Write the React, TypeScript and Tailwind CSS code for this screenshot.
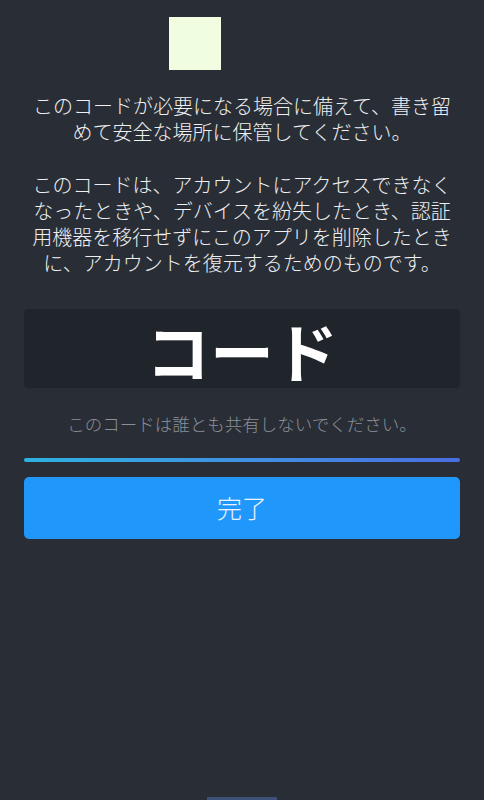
const font = "font-['Noto_Sans_CJK_JP','Noto_Sans',sans-serif]";

export default function App() {
  return (
    <div className={`flex h-[800px] w-full flex-col bg-[#292d35] px-6 ${font}`}>
      <div className="ml-[145px] mt-[17px] h-[53px] w-[52px] bg-[#f1fde0]" />

      <div className="mt-[23px] text-center text-[20px] font-light leading-[26px] text-[#eef0f2]">
        <p>
          <span className="block whitespace-nowrap">このコードが必要になる場合に備えて、書き留</span>
          <span className="block whitespace-nowrap">めて安全な場所に保管してください。</span>
        </p>
        <p className="mt-[27px]">
          <span className="block whitespace-nowrap">このコードは、アカウントにアクセスできなく</span>
          <span className="block whitespace-nowrap">なったときや、デバイスを紛失したとき、認証</span>
          <span className="block whitespace-nowrap">用機器を移行せずにこのアプリを削除したとき</span>
          <span className="block whitespace-nowrap">に、アカウントを復元するためのものです。</span>
        </p>
      </div>

      <div className="mt-[33px] flex h-[79px] items-center justify-center rounded-[4px] bg-[#20242b]">
        <span className="text-[64px] font-bold leading-none text-white">コード</span>
      </div>

      <p className="mt-[24px] text-center text-[17.5px] font-light leading-[24px] text-[#8b9098]">
        このコードは誰とも共有しないでください。
      </p>

      <div className="mt-[22px] h-[4px] rounded-full bg-gradient-to-r from-[#2cb2e2] to-[#4a6ee2]" />

      <button
        type="button"
        className="mt-[15px] flex h-[62px] items-center justify-center rounded-[5px] bg-[#1f97fb] text-[25px] font-light text-[#eaf3ff]"
      >
        完了
      </button>

      <div className="mx-auto mt-auto h-[3px] w-[70px] bg-[#3c5078]" />
    </div>
  );
}
